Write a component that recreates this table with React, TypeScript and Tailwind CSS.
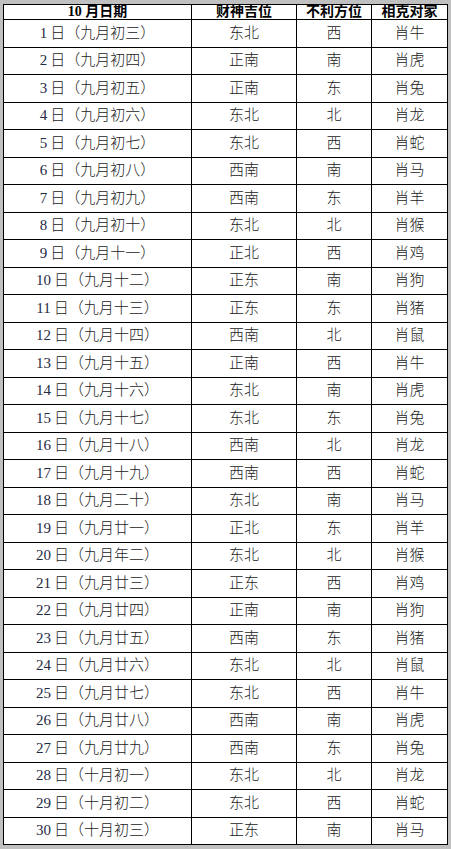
import React from 'react';

// [公历日, 农历, 财神吉位, 不利方位, 相克对家]
const rows: [number, string, string, string, string][] = [
    [1, '九月初三', '东北', '西', '肖牛'],
    [2, '九月初四', '正南', '南', '肖虎'],
    [3, '九月初五', '正南', '东', '肖兔'],
    [4, '九月初六', '东北', '北', '肖龙'],
    [5, '九月初七', '东北', '西', '肖蛇'],
    [6, '九月初八', '西南', '南', '肖马'],
    [7, '九月初九', '西南', '东', '肖羊'],
    [8, '九月初十', '东北', '北', '肖猴'],
    [9, '九月十一', '正北', '西', '肖鸡'],
    [10, '九月十二', '正东', '南', '肖狗'],
    [11, '九月十三', '正东', '东', '肖猪'],
    [12, '九月十四', '西南', '北', '肖鼠'],
    [13, '九月十五', '正南', '西', '肖牛'],
    [14, '九月十六', '东北', '南', '肖虎'],
    [15, '九月十七', '东北', '东', '肖兔'],
    [16, '九月十八', '西南', '北', '肖龙'],
    [17, '九月十九', '西南', '西', '肖蛇'],
    [18, '九月二十', '东北', '南', '肖马'],
    [19, '九月廿一', '正北', '东', '肖羊'],
    [20, '九月年二', '东北', '北', '肖猴'],
    [21, '九月廿三', '正东', '西', '肖鸡'],
    [22, '九月廿四', '正南', '南', '肖狗'],
    [23, '九月廿五', '西南', '东', '肖猪'],
    [24, '九月廿六', '东北', '北', '肖鼠'],
    [25, '九月廿七', '东北', '西', '肖牛'],
    [26, '九月廿八', '西南', '南', '肖虎'],
    [27, '九月廿九', '西南', '东', '肖兔'],
    [28, '十月初一', '东北', '北', '肖龙'],
    [29, '十月初二', '东北', '西', '肖蛇'],
    [30, '十月初三', '正东', '南', '肖马'],
];

const font = { fontFamily: '"Liberation Serif", "Noto Sans CJK SC", serif' };

const App = () => {
    return (
        <div className="w-[451px] h-[849px] bg-[#c0c0c0] pt-[4px] pl-[3px]" style={font}>
            <table className="table-fixed border-collapse bg-white w-[444px] h-[841px] text-[15px] leading-none text-[#222] font-light">
                <colgroup>
                    <col className="w-[188px]" />
                    <col className="w-[105px]" />
                    <col className="w-[75px]" />
                    <col className="w-[76px]" />
                </colgroup>
                <thead>
                    <tr>
                        <th className="border border-black font-bold text-black text-[14px]">10 月日期</th>
                        <th className="border border-black font-bold text-black text-[14px]">财神吉位</th>
                        <th className="border border-black font-bold text-black text-[14px]">不利方位</th>
                        <th className="border border-black font-bold text-black text-[14px]">相克对家</th>
                    </tr>
                </thead>
                <tbody>
                    {rows.map(([day, lunar, lucky, bad, clash]) => (
                        <tr key={day}>
                            <td className="border border-black text-center">
                                <span className="text-[#1f2a44] font-normal mr-[3px]">{day}</span>日（{lunar}）
                            </td>
                            <td className="border border-black text-center">{lucky}</td>
                            <td className="border border-black text-center">{bad}</td>
                            <td className="border border-black text-center">{clash}</td>
                        </tr>
                    ))}
                </tbody>
            </table>
        </div>
    );
};

export default App;
